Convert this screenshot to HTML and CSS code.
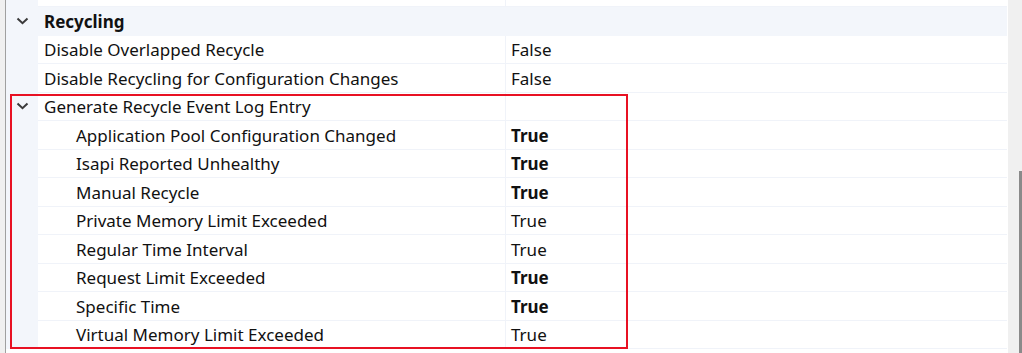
FILE: index.html
```html
<!DOCTYPE html>
<html lang="en">
<head>
  <meta charset="UTF-8">
  <title>Recycling Properties</title>
  <link rel="stylesheet" href="styles.css">
</head>
<body>
  <div class="window">
    <!-- Left frame edge -->
    <div class="frame-edge"></div>

    <!-- Property grid -->
    <div class="grid">
      <div class="rows">
        <div class="row cut">
          <div class="gutter"></div>
          <div class="name">Shutdown Executable Parameters</div>
          <div class="value"></div>
        </div>

        <div class="row category">
          <div class="gutter">
            <svg class="chevron" viewBox="0 0 13 8"><path d="M1.5 1.5 L6.5 6.2 L11.5 1.5"/></svg>
          </div>
          <div class="name">Recycling</div>
          <div class="value"></div>
        </div>

        <div class="row">
          <div class="gutter"></div>
          <div class="name">Disable Overlapped Recycle</div>
          <div class="value">False</div>
        </div>
        <div class="row">
          <div class="gutter"></div>
          <div class="name">Disable Recycling for Configuration Changes</div>
          <div class="value">False</div>
        </div>

        <div class="row">
          <div class="gutter">
            <svg class="chevron" viewBox="0 0 13 8"><path d="M1.5 1.5 L6.5 6.2 L11.5 1.5"/></svg>
          </div>
          <div class="name">Generate Recycle Event Log Entry</div>
          <div class="value"></div>
        </div>
        <div class="row child">
          <div class="gutter"></div>
          <div class="name">Application Pool Configuration Changed</div>
          <div class="value changed">True</div>
        </div>
        <div class="row child">
          <div class="gutter"></div>
          <div class="name">Isapi Reported Unhealthy</div>
          <div class="value changed">True</div>
        </div>
        <div class="row child">
          <div class="gutter"></div>
          <div class="name">Manual Recycle</div>
          <div class="value changed">True</div>
        </div>
        <div class="row child">
          <div class="gutter"></div>
          <div class="name">Private Memory Limit Exceeded</div>
          <div class="value">True</div>
        </div>
        <div class="row child">
          <div class="gutter"></div>
          <div class="name">Regular Time Interval</div>
          <div class="value">True</div>
        </div>
        <div class="row child">
          <div class="gutter"></div>
          <div class="name">Request Limit Exceeded</div>
          <div class="value changed">True</div>
        </div>
        <div class="row child">
          <div class="gutter"></div>
          <div class="name">Specific Time</div>
          <div class="value changed">True</div>
        </div>
        <div class="row child">
          <div class="gutter"></div>
          <div class="name">Virtual Memory Limit Exceeded</div>
          <div class="value">True</div>
        </div>
      </div>

      <!-- Highlight box drawn over the event log group -->
      <div class="highlight"></div>
    </div>

    <!-- Scrollbar -->
    <div class="scrollbar">
      <div class="thumb"></div>
    </div>
  </div>
</body>
</html>
```

FILE: styles.css
```css
body {
  margin: 0;
  background: #ffffff;
  font-family: 'Segoe UI', 'Noto Sans', sans-serif;
  font-size: 17px;
  color: #111111;
}

.window {
  display: flex;
  height: 353px;
  overflow: hidden;
}

.frame-edge {
  width: 5px;
  background: #f0f0f0;
  border-right: 1px solid #a0a0a0;
  flex-shrink: 0;
}

.grid {
  position: relative;
  flex: 1;
  overflow: hidden;
}

.rows {
  margin-top: -21.5px;
}

.row {
  display: grid;
  grid-template-columns: 32px 468px 1fr;
  height: 28.5px;
  margin-right: 1px;
}

.row .gutter {
  background: #f3f6fb;
  display: flex;
  align-items: center;
  justify-content: center;
  padding-bottom: 1px;
}

.row .name,
.row .value {
  display: flex;
  align-items: center;
  border-bottom: 1px solid #f0f3f9;
  white-space: nowrap;
  overflow: hidden;
  padding-top: 1px;
}

.row .name {
  padding-left: 6px;
  border-right: 1px solid #f0f3f9;
}

.row .value {
  padding-left: 5px;
}

.row.child .name {
  padding-left: 38px;
}

.value.changed {
  font-weight: bold;
}

/* Category header */
.row.category {
  background: #f3f6fb;
}

.row.category .name {
  font-weight: bold;
  border-right: none;
  border-bottom: none;
}

.row.category .value {
  border-bottom: none;
}

.chevron {
  width: 13px;
  height: 8px;
  fill: none;
  stroke: #3a3a3a;
  stroke-width: 2;
}

.highlight {
  position: absolute;
  left: 4px;
  top: 94px;
  width: 614px;
  height: 251px;
  border: 2px solid #e81123;
}

/* Scrollbar */
.scrollbar {
  width: 14px;
  flex-shrink: 0;
  background: #f0f0f0;
  display: flex;
  justify-content: flex-end;
  padding-top: 171px;
  box-sizing: border-box;
}

.thumb {
  width: 3px;
  height: 200px;
  background: #8a8a8a;
}
```
